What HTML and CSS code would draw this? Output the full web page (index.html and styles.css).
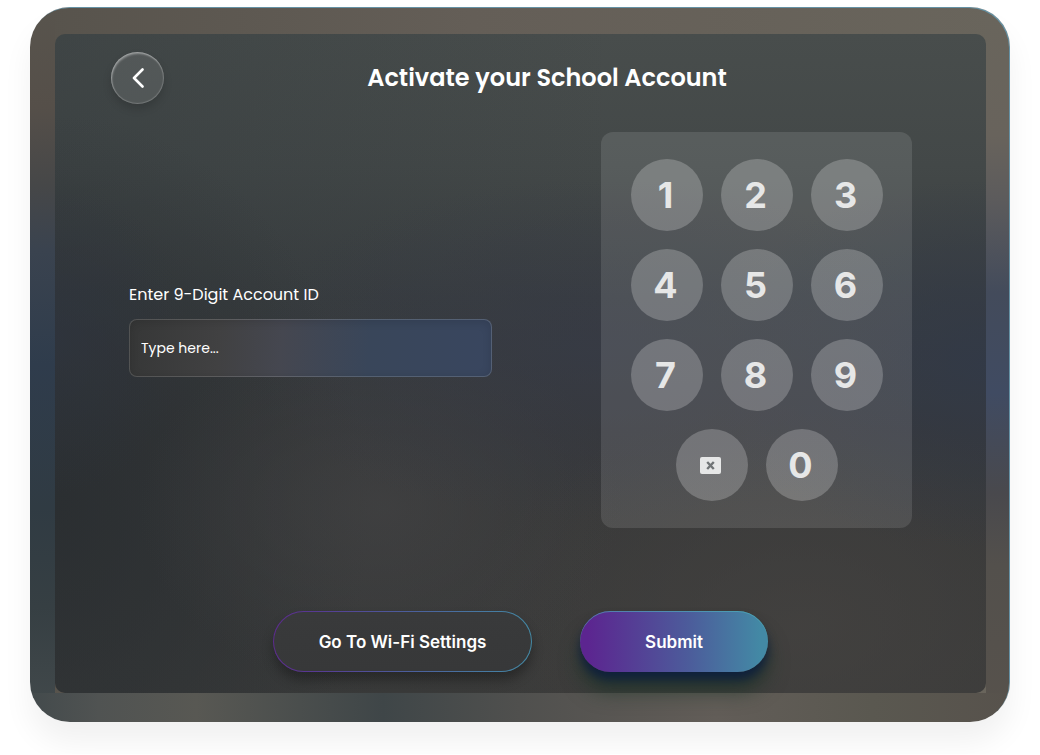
FILE: index.html
```
<!DOCTYPE html>
<html lang="en">

<head>
    <meta charset="UTF-8">
    <meta name="viewport" content="width=device-width, initial-scale=1.0">
    <link rel="stylesheet" href="styles.css">
    <title>Activate your School Account</title>
</head>

<body>

    <div class="frame">
        <main class="screen">
            <header class="header">
                <button class="back" type="button" aria-label="Back">
                    <svg width="12" height="20" viewBox="0 0 12 20" fill="none" stroke="#fff" stroke-width="2.6" stroke-linecap="round" stroke-linejoin="round">
                        <path d="M10.5 1.5 L2 10 L10.5 18.5" />
                    </svg>
                </button>
                <h1 class="title">Activate your School Account</h1>
            </header>

            <form id="activate" class="content">
                <div class="field">
                    <label class="label" for="account">Enter 9-Digit Account ID</label>
                    <input class="input" id="account" type="text" inputmode="numeric" maxlength="9" placeholder="Type here...">
                </div>

                <div class="keypad">
                    <button class="key" type="button">1</button>
                    <button class="key" type="button">2</button>
                    <button class="key" type="button">3</button>
                    <button class="key" type="button">4</button>
                    <button class="key" type="button">5</button>
                    <button class="key" type="button">6</button>
                    <button class="key" type="button">7</button>
                    <button class="key" type="button">8</button>
                    <button class="key" type="button">9</button>
                    <button class="key" type="button" aria-label="Delete">
                        <svg width="21" height="17" viewBox="0 0 21 17">
                            <rect width="21" height="17" rx="2" fill="#e6e7e7" />
                            <path d="M7.2 5 L13.8 12 M13.8 5 L7.2 12" stroke="#707476" stroke-width="2.4" />
                        </svg>
                    </button>
                    <button class="key" type="button">0</button>
                </div>
            </form>

            <div class="actions">
                <button class="btn btn-outline" type="button">Go To Wi-Fi Settings</button>
                <button class="btn btn-submit" type="submit" form="activate">Submit</button>
            </div>
        </main>
    </div>

</body>

</html>
```
FILE: styles.css
```
* {
    margin: 0;
    padding: 0;
    box-sizing: border-box;
}

body {
    padding: 7px 30px 32px;
    background-color: #fff;
    font-family: "Poppins", "Inter", sans-serif;
    color: #fff;
}

button,
input {
    font-family: inherit;
    color: inherit;
    border: none;
}

button {
    font-family: "Inter", sans-serif;
    cursor: pointer;
}

.frame {
    padding: 27px 24px 29px 25px;
    border-radius: 40px;
    background:
        linear-gradient(90deg, #434a4c, #505352 7%, #585853 17%, #3f4648 36%, #50504e 50%, #625d58 70%, #5a5850 86%, #57524c) bottom / 100% 29px no-repeat,
        linear-gradient(#69655c, #68635c 18%, #5c5b5c 27%, #434b5b 40%, #404b62 54%, #49494d 68%, #53504c 78%, #57524c) right / 24px 100% no-repeat,
        linear-gradient(#58544d, #554f49 14%, #464748 25%, #3a434f 34%, #2f3c4c 50%, #303b43 70%, #363f43 84%, #434a4c) left / 25px 100% no-repeat,
        linear-gradient(90deg, #57534c, #645e57 45%, #69655c);
    box-shadow: inset -1px 1px 0 #6592a5, 0 20px 30px rgba(0, 0, 0, .06);
}

.screen {
    display: flex;
    flex-direction: column;
    padding: 18px 56px 21px;
    border-radius: 10px;
    background:
        radial-gradient(38% 26% at 58% 48%, rgba(54, 58, 70, .75), transparent),
        radial-gradient(30% 28% at 100% 50%, rgba(49, 57, 72, .85), transparent),
        radial-gradient(14% 24% at 0 46%, rgba(46, 52, 64, .6), transparent),
        radial-gradient(26% 28% at 35% 72%, rgba(66, 66, 67, .7), transparent),
        radial-gradient(36% 34% at 80% 90%, rgba(69, 67, 65, .7), transparent),
        radial-gradient(34% 60% at 0 72%, rgba(41, 45, 48, .85), transparent),
        linear-gradient(90deg, rgba(42, 50, 54, .3), transparent 60%),
        linear-gradient(#484d4c, #434848 20%, #3a3e40 40%, #373839 60%, #3b3b3a);
}

.header {
    display: flex;
    align-items: center;
}

.back {
    display: flex;
    align-items: center;
    justify-content: center;
    width: 53px;
    height: 52px;
    border-radius: 50%;
    background-color: rgba(255, 255, 255, .1);
    box-shadow: inset 0 0 1px 1px rgba(255, 255, 255, .2), inset 1px 2px 2px rgba(255, 255, 255, .3), 0 5px 8px rgba(0, 0, 0, .15);
}

.title {
    flex: 1;
    font-size: 24px;
    font-weight: 600;
    line-height: 36px;
    text-align: center;
}

.content {
    display: flex;
    align-items: center;
    justify-content: space-between;
    gap: 40px;
    margin-top: 28px;
    padding: 0 18px;
}

.field {
    display: flex;
    flex: 0 1 363px;
    flex-direction: column;
    gap: 12px;
}

.label {
    font-size: 16px;
    line-height: 24px;
}

.input {
    width: 100%;
    height: 58px;
    padding: 0 11px;
    border: 1px solid rgba(255, 255, 255, .14);
    border-radius: 8px;
    background: linear-gradient(95deg, #363737, #414142 25%, #454750 42%, #39465a 66%, #39465f) border-box;
    box-shadow: inset 0 2px 10px rgba(0, 0, 0, .12);
    font-size: 14px;
}

.input::placeholder {
    color: #fff;
    opacity: 1;
}

.keypad {
    display: flex;
    flex-wrap: wrap;
    flex-shrink: 0;
    justify-content: center;
    gap: 18px;
    width: 311px;
    padding: 27px 29px;
    border-radius: 12px;
    background-color: rgba(255, 255, 255, .11);
}

.key {
    display: flex;
    align-items: center;
    justify-content: center;
    width: 72px;
    height: 72px;
    padding-right: 2px;
    border-radius: 50%;
    background-color: rgba(255, 255, 255, .22);
    font-size: 36px;
    font-weight: 700;
    color: #e6e7e7;
}

.actions {
    display: flex;
    justify-content: center;
    gap: 48px;
    margin-top: 83px;
}

.btn {
    height: 61px;
    border-radius: 31px;
    font-size: 17px;
    font-weight: 600;
}

.btn-outline {
    width: 259px;
    border: 1px solid transparent;
    background:
        linear-gradient(#393a3b, #373839) padding-box,
        linear-gradient(90deg, #5c2a8e, #4c5c9b 50%, #4389a5) border-box;
    box-shadow: 0 8px 12px rgba(0, 0, 0, .3);
}

.btn-submit {
    width: 188px;
    background: linear-gradient(90deg, #5c2590 4%, #4c5c9b 58%, #4389a5 96%);
    box-shadow: inset 0 1px 0 rgba(80, 180, 190, .6), 0 8px 10px rgba(10, 28, 62, .8), 0 20px 20px rgba(24, 50, 36, .6);
}
```
